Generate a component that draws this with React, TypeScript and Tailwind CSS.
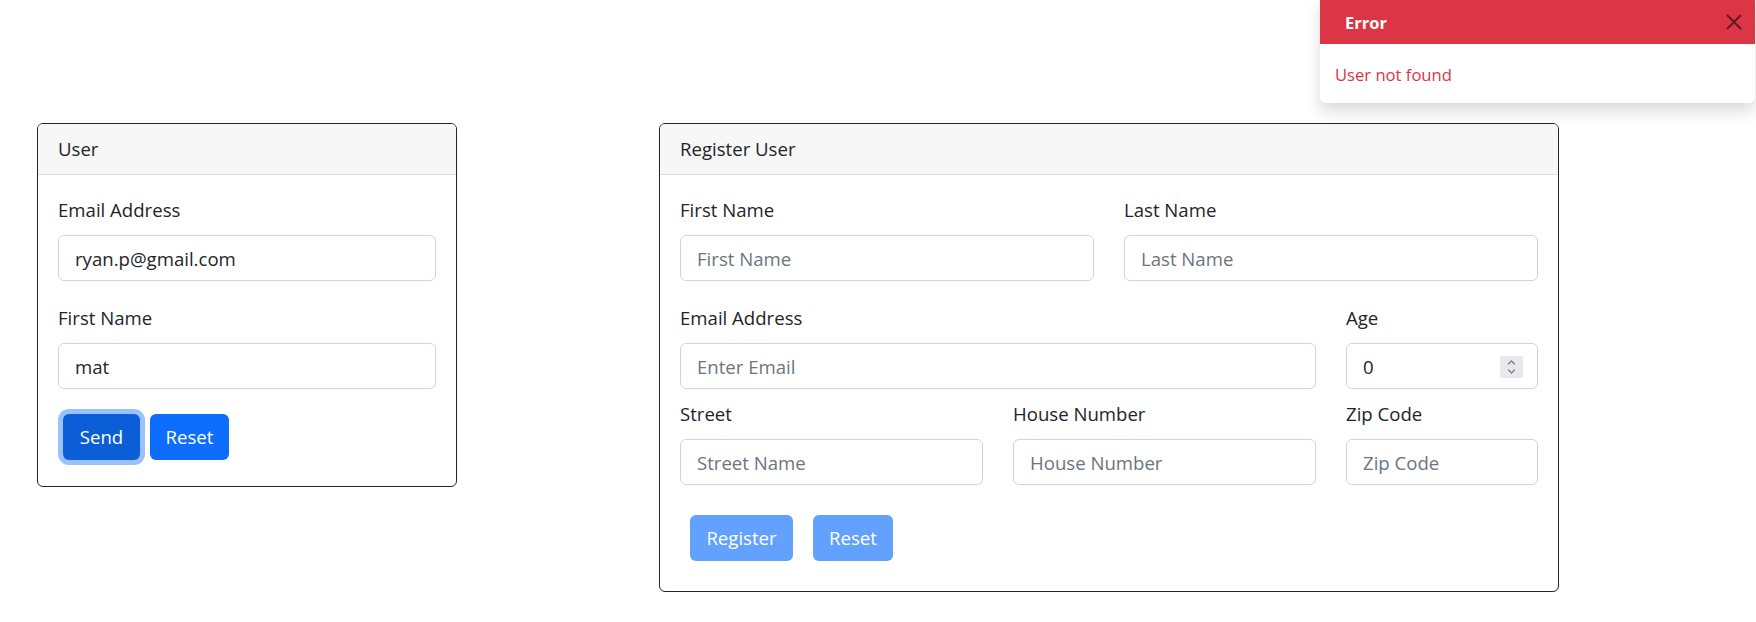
import React from "react";

const inputCls =
  "block w-full h-[46px] box-border border border-[#ced4da] rounded-[6px] bg-white px-[16px] text-[18.6px] text-[#212529] placeholder:text-[#6c757d] outline-none";
const labelCls = "block leading-[30px] mb-[10px] text-[18.6px] text-[#212529]";

function Spinner() {
  return (
    <div className="absolute right-[15px] top-[13px] w-[23px] h-[22px] bg-[#e9e9ed] rounded-[2px] flex items-center justify-center">
      <svg width="23" height="22" viewBox="0 0 23 22" fill="none">
        <path d="M8.5 8 L11.5 5 L14.5 8" stroke="#7b7b7b" strokeWidth="1.2" strokeLinecap="round" strokeLinejoin="round" />
        <path d="M8.5 14 L11.5 17 L14.5 14" stroke="#7b7b7b" strokeWidth="1.2" strokeLinecap="round" strokeLinejoin="round" />
      </svg>
    </div>
  );
}

export default function App() {
  return (
    <div
      className="relative w-full h-[622px] bg-white overflow-hidden text-[#212529]"
      style={{ fontFamily: '"Open Sans", "Noto Sans", sans-serif' }}
    >
      <div className="flex items-start pt-[123px] pl-[37px] gap-[202px]">
        {/* User card */}
        <div className="w-[420px] box-border border border-[#212529] rounded-[6px] overflow-hidden">
          <div className="h-[51px] box-border border-b border-[#dcdcdc] bg-[#f7f7f7] px-[20px] flex items-center text-[18.6px]">
            User
          </div>
          <div className="px-[20px] pt-[20px] pb-[26px]">
            <label className={labelCls}>Email Address</label>
            <input className={inputCls} defaultValue="ryan.p@gmail.com" readOnly />
            <label className={labelCls + " mt-[22px]"}>First Name</label>
            <input className={inputCls} defaultValue="mat" readOnly />
            <div className="flex mt-[25px]">
              <button className="ml-[5px] w-[77px] h-[46px] rounded-[6px] bg-[#0b5ed7] text-white text-[18.6px] shadow-[0_0_0_5px_#98c1fe]">
                Send
              </button>
              <button className="ml-[10px] w-[79px] h-[46px] rounded-[6px] bg-[#0d6efd] text-white text-[18.6px]">
                Reset
              </button>
            </div>
          </div>
        </div>

        {/* Register card */}
        <div className="w-[900px] box-border border border-[#212529] rounded-[6px] overflow-hidden">
          <div className="h-[51px] box-border border-b border-[#dcdcdc] bg-[#f7f7f7] px-[20px] flex items-center text-[18.6px]">
            Register User
          </div>
          <div className="px-[20px] pt-[20px] pb-[30px]">
            <div className="grid grid-cols-2 gap-x-[30px]">
              <div>
                <label className={labelCls}>First Name</label>
                <input className={inputCls} placeholder="First Name" />
              </div>
              <div>
                <label className={labelCls}>Last Name</label>
                <input className={inputCls} placeholder="Last Name" />
              </div>
            </div>
            <div className="grid grid-cols-[1fr_192px] gap-x-[30px] mt-[22px]">
              <div>
                <label className={labelCls}>Email Address</label>
                <input className={inputCls} placeholder="Enter Email" />
              </div>
              <div>
                <label className={labelCls}>Age</label>
                <div className="relative">
                  <input className={inputCls} defaultValue="0" readOnly />
                  <Spinner />
                </div>
              </div>
            </div>
            <div className="grid grid-cols-[1fr_1fr_192px] gap-x-[30px] mt-[10px]">
              <div>
                <label className={labelCls}>Street</label>
                <input className={inputCls} placeholder="Street Name" />
              </div>
              <div>
                <label className={labelCls}>House Number</label>
                <input className={inputCls} placeholder="House Number" />
              </div>
              <div>
                <label className={labelCls}>Zip Code</label>
                <input className={inputCls} placeholder="Zip Code" />
              </div>
            </div>
            <div className="flex mt-[30px]">
              <button className="ml-[10px] w-[103px] h-[46px] rounded-[6px] bg-[#62a1fe] text-white text-[18.6px]">
                Register
              </button>
              <button className="ml-[20px] w-[80px] h-[46px] rounded-[6px] bg-[#62a1fe] text-white text-[18.6px]">
                Reset
              </button>
            </div>
          </div>
        </div>
      </div>

      {/* Toast */}
      <div className="absolute top-0 right-[1px] w-[435px] bg-white rounded-b-[6px] shadow-[0_8px_16px_rgba(0,0,0,0.15)]">
        <div className="h-[44px] bg-[#dc3545] flex items-center pl-[25px] pr-[12px] pt-[2px]">
          <span className="text-white font-bold text-[16.5px]">Error</span>
          <svg className="ml-auto -mt-[2px]" width="18" height="18" viewBox="0 0 18 18" fill="none">
            <path d="M2 2 L16 16 M16 2 L2 16" stroke="#000" strokeOpacity="0.55" strokeWidth="2" />
          </svg>
        </div>
        <div className="pl-[15px] pt-[16px] pb-[13px] leading-[30px] text-[16.6px] text-[#dc3545]">
          User not found
        </div>
      </div>
    </div>
  );
}
